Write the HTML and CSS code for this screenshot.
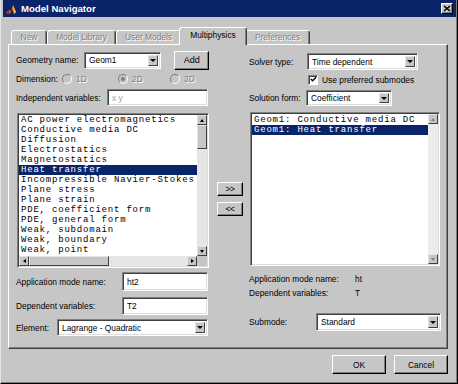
FILE: index.html
```html
<!DOCTYPE html>
<html lang="en">
<head>
  <meta charset="UTF-8">
  <title>Model Navigator</title>
  <link rel="stylesheet" href="styles.css">
</head>
<body>

<div class="window">
  <div class="titlebar">
    <svg class="app-icon" viewBox="0 0 12 12">
      <path d="M1 10 L4 7 L6 8 L8 2 L11 9 L9 11 L7 6 L5 11 Z" fill="#e8731c"/>
      <path d="M8 2 L11 9 L9 11 Z" fill="#f6c23a"/>
      <path d="M1 10 L4 7 L5 11 Z" fill="#b3261e"/>
    </svg>
    <span class="title">Model Navigator</span>
    <span class="close">
      <svg viewBox="0 0 8 7"><path d="M1 1 L7 6 M7 1 L1 6" stroke="#000" stroke-width="1.6"/></svg>
    </span>
  </div>

  <div class="tabs">
    <div class="tab disabled tab-new">New</div>
    <div class="tab disabled tab-lib">Model Library</div>
    <div class="tab disabled tab-user">User Models</div>
    <div class="tab active tab-multi">Multiphysics</div>
    <div class="tab disabled tab-pref">Preferences</div>
  </div>

  <div class="panel">
    <!-- left column -->
    <div class="col col-left">
      <div class="row row-geom">
        <span class="label lw-geom">Geometry name:</span>
        <div class="select sw-geom"><span class="value">Geom1</span><span class="drop"></span></div>
        <div class="btn btn-add">Add</div>
      </div>

      <div class="row row-dim">
        <span class="label lw-dim">Dimension:</span>
        <span class="radio-item r1"><span class="radio"></span><span class="disabled">1D</span></span>
        <span class="radio-item r2"><span class="radio checked"></span><span class="disabled">2D</span></span>
        <span class="radio-item"><span class="radio"></span><span class="disabled">3D</span></span>
      </div>

      <div class="row row-indep">
        <span class="label lw-indep">Independent variables:</span>
        <div class="input iw-indep"><span class="muted">x y</span></div>
      </div>

      <div class="listbox list-left">
        <div class="items">
          <div class="item">AC power electromagnetics</div>
          <div class="item">Conductive media DC</div>
          <div class="item">Diffusion</div>
          <div class="item">Electrostatics</div>
          <div class="item">Magnetostatics</div>
          <div class="item selected">Heat transfer</div>
          <div class="item">Incompressible Navier-Stokes</div>
          <div class="item">Plane stress</div>
          <div class="item">Plane strain</div>
          <div class="item">PDE, coefficient form</div>
          <div class="item">PDE, general form</div>
          <div class="item">Weak, subdomain</div>
          <div class="item">Weak, boundary</div>
          <div class="item">Weak, point</div>
        </div>
        <div class="vscroll">
          <div class="sbtn up"></div>
          <div class="thumb vthumb"></div>
          <div class="track"></div>
          <div class="sbtn down"></div>
        </div>
        <div class="hscroll">
          <div class="sbtn left"></div>
          <div class="thumb hthumb"></div>
          <div class="track"></div>
          <div class="sbtn right"></div>
        </div>
        <div class="corner"></div>
      </div>

      <div class="row row-app">
        <span class="label lw-app">Application mode name:</span>
        <div class="input iw-app">ht2</div>
      </div>

      <div class="row row-dep">
        <span class="label lw-app">Dependent variables:</span>
        <div class="input iw-app">T2</div>
      </div>

      <div class="row row-elem">
        <span class="label lw-elem">Element:</span>
        <div class="select sw-elem"><span class="value">Lagrange - Quadratic</span><span class="drop"></span></div>
      </div>
    </div>

    <!-- middle buttons -->
    <div class="col col-mid">
      <div class="btn btn-move">&gt;&gt;</div>
      <div class="btn btn-move">&lt;&lt;</div>
    </div>

    <!-- right column -->
    <div class="col col-right">
      <div class="row row-solver">
        <span class="label lw-solver">Solver type:</span>
        <div class="select sw-solver"><span class="value">Time dependent</span><span class="drop"></span></div>
      </div>

      <div class="row row-check">
        <span class="checkbox">
          <svg viewBox="0 0 8 8"><path d="M1 3.5 L3 5.5 L7 1.5" stroke="#000" stroke-width="1.6" fill="none"/></svg>
        </span>
        <span>Use preferred submodes</span>
      </div>

      <div class="row row-form">
        <span class="label lw-form">Solution form:</span>
        <div class="select sw-form"><span class="value">Coefficient</span><span class="drop"></span></div>
      </div>

      <div class="listbox list-right">
        <div class="items">
          <div class="item">Geom1: Conductive media DC</div>
          <div class="item selected">Geom1: Heat transfer</div>
        </div>
        <div class="vscroll light">
          <div class="sbtn up dim"></div>
          <div class="track"></div>
          <div class="sbtn down dim"></div>
        </div>
      </div>

      <div class="row row-info first">
        <span class="label lw-app">Application mode name:</span>
        <span>ht</span>
      </div>
      <div class="row row-info">
        <span class="label lw-app">Dependent variables:</span>
        <span>T</span>
      </div>

      <div class="row row-sub">
        <span class="label lw-sub">Submode:</span>
        <div class="select sw-sub"><span class="value">Standard</span><span class="drop"></span></div>
      </div>
    </div>
  </div>

  <div class="footer">
    <div class="btn btn-foot">OK</div>
    <div class="btn btn-foot">Cancel</div>
  </div>
</div>

</body>
</html>
```

FILE: styles.css
```css
* {
  box-sizing: border-box;
}

body {
  margin: 0;
  background-color: #c6c6c6;
  font-family: 'Liberation Sans', Arial, sans-serif;
  font-size: 8.4px;
  color: #000;
}

.window {
  width: 458px;
  height: 384px;
  background-color: #c6c6c6;
  border-left: 1px solid #e4e4e4;
  border-right: 1px solid #000;
  border-bottom: 1px solid #000;
  box-shadow: inset -1px -1px #808080;
  display: flex;
  flex-direction: column;
}

/* title bar */
.titlebar {
  height: 17px;
  margin: 0 1px 0 2px;
  padding: 0 3px 0 2px;
  background-color: #0a246a;
  display: flex;
  align-items: center;
}

.app-icon {
  width: 12px;
  height: 12px;
}

.title {
  flex: 1;
  margin-left: 4px;
  color: #fff;
  font-weight: bold;
  font-size: 9.6px;
}

.close {
  width: 12px;
  height: 11px;
  background-color: #c6c6c6;
  border: 1px solid;
  border-color: #fff #000 #000 #fff;
  box-shadow: inset -1px -1px #808080;
  display: flex;
  align-items: center;
  justify-content: center;
}

.close svg {
  width: 8px;
  height: 7px;
}

/* tabs */
.tabs {
  display: flex;
  align-items: flex-end;
  height: 17px;
  margin: 10px 0 0 10px;
  position: relative;
  z-index: 1;
}

.tab {
  height: 14px;
  line-height: 12px;
  text-align: center;
  border-top: 1px solid #fff;
  border-left: 1px solid #fff;
  border-right: 1px solid #404040;
  border-radius: 3px 3px 0 0;
  box-shadow: inset -1px 0 #808080;
  background-color: #c6c6c6;
}

.tab-new { width: 36px; }
.tab-lib { width: 69px; }
.tab-user { width: 65px; }
.tab-pref { width: 65px; }

.tab-multi {
  width: 68px;
  height: 18px;
  line-height: 15px;
  margin: 0 -2px -1px -2px;
  position: relative;
  z-index: 2;
}

.disabled {
  color: #808080;
  text-shadow: 1px 1px #fff;
}

/* panel */
.panel {
  width: 440px;
  height: 305px;
  margin-left: 7px;
  padding: 5px 0 0 7px;
  border: 1px solid;
  border-color: #fff #404040 #404040 #fff;
  box-shadow: inset -1px -1px #808080;
  display: flex;
}

.col {
  display: flex;
  flex-direction: column;
}

.col-left {
  width: 193px;
  margin-right: 8px;
}

.col-mid {
  width: 26px;
  margin-right: 6px;
  padding-top: 132px;
}

.col-right {
  width: 192px;
}

.row {
  display: flex;
  align-items: center;
  white-space: nowrap;
}

.label {
  flex-shrink: 0;
}

.lw-geom { width: 68px; }
.lw-dim { width: 46px; }
.lw-indep { width: 91px; }
.lw-app { width: 106px; }
.lw-elem { width: 41px; }
.lw-solver { width: 58px; }
.lw-form { width: 57px; }
.lw-sub { width: 67px; }

.row-geom { height: 20px; }
.row-dim { height: 11px; margin-top: 3px; }
.row-indep { height: 17px; margin-top: 5px; }
.row-app { height: 19px; margin-top: 4px; }
.row-dep { height: 18px; margin-top: 6px; }
.row-elem { height: 17px; margin-top: 4px; }

.row-solver { height: 17px; margin-top: 3px; }
.row-check { height: 11px; margin-top: 4px; padding-left: 59px; }
.row-form { height: 16px; margin-top: 5px; }
.row-info { height: 11px; margin-top: 3px; }
.row-info.first { margin-top: 7px; }
.row-sub { height: 18px; margin-top: 15px; }

/* text fields */
.input,
.select {
  height: 100%;
  background-color: #fff;
  border: 1px solid;
  border-color: #808080 #fff #fff #808080;
  box-shadow: inset 1px 1px #404040, inset -1px -1px #dcdcdc;
  display: flex;
  align-items: center;
  padding-left: 4px;
}

.muted {
  color: #a0a0a0;
}

.iw-indep { width: 101px; }
.iw-app { width: 86px; }

.select {
  padding: 2px 2px 2px 4px;
}

.select .value {
  flex: 1;
}

.drop {
  width: 10px;
  height: 100%;
  background-color: #c6c6c6;
  border: 1px solid;
  border-color: #e4e4e4 #404040 #404040 #e4e4e4;
  display: flex;
  align-items: center;
  justify-content: center;
}

.drop::after {
  content: '';
  border-left: 3px solid transparent;
  border-right: 3px solid transparent;
  border-top: 3px solid #000;
}

.sw-geom { width: 78px; height: 17px; }
.sw-elem { width: 151px; }
.sw-solver { width: 111px; }
.sw-form { width: 86px; }
.sw-sub { width: 125px; }

/* buttons */
.btn {
  background-color: #c6c6c6;
  border: 1px solid;
  border-color: #fff #000 #000 #fff;
  box-shadow: inset -1px -1px #808080;
  display: flex;
  align-items: center;
  justify-content: center;
}

.btn-add {
  width: 35px;
  height: 19px;
  margin-left: 13px;
  font-size: 9px;
}

.btn-move {
  height: 14px;
  margin-bottom: 6px;
  letter-spacing: -0.5px;
}

.btn-foot {
  width: 54px;
  height: 19px;
}

/* radios and checkbox */
.radio-item {
  display: flex;
  align-items: center;
  gap: 4px;
}

.r1 { width: 56px; }
.r2 { width: 52px; }

.radio {
  width: 10px;
  height: 10px;
  border-radius: 50%;
  border: 1px solid;
  border-color: #808080 #fff #fff #808080;
  background-color: #c6c6c6;
  display: flex;
  align-items: center;
  justify-content: center;
}

.radio.checked::after {
  content: '';
  width: 4px;
  height: 4px;
  border-radius: 50%;
  background-color: #808080;
}

.checkbox {
  width: 10px;
  height: 10px;
  margin-right: 4px;
  background-color: #fff;
  border: 1px solid;
  border-color: #808080 #fff #fff #808080;
  box-shadow: inset 1px 1px #404040;
  display: flex;
  align-items: center;
  justify-content: center;
}

.checkbox svg {
  width: 7px;
  height: 7px;
}

/* list boxes */
.listbox {
  background-color: #fff;
  border: 1px solid;
  border-color: #808080 #fff #fff #808080;
  box-shadow: inset 1px 1px #404040, inset -1px -1px #dcdcdc;
  padding: 1px;
  display: grid;
  grid-template-columns: 1fr 10px;
}

.list-left {
  width: 192px;
  height: 155px;
  margin: 7px 0 0 1px;
  grid-template-rows: 1fr 10px;
}

.list-right {
  width: 190px;
  height: 154px;
  margin: 6px 0 0 1px;
}

.items {
  overflow: hidden;
  white-space: nowrap;
  font-family: 'Liberation Mono', 'Courier New', monospace;
  font-size: 9px;
  letter-spacing: 0.8px;
}

.list-right .items {
  padding-top: 1px;
}

.item {
  height: 10px;
  line-height: 10px;
  padding-left: 2px;
}

.item.selected {
  background-color: #0a246a;
  color: #fff;
}

.vscroll,
.hscroll {
  display: flex;
  background-color: #e6e6e6;
}

.vscroll {
  flex-direction: column;
}

.vscroll.light {
  background-color: #ececec;
}

.track {
  flex: 1;
}

.sbtn,
.thumb {
  background-color: #c6c6c6;
  border: 1px solid;
  border-color: #e4e4e4 #404040 #404040 #e4e4e4;
  flex-shrink: 0;
}

.sbtn {
  width: 10px;
  height: 10px;
  display: flex;
  align-items: center;
  justify-content: center;
}

.sbtn::after {
  content: '';
  border: 2px solid transparent;
}

.sbtn.up::after { border-bottom: 3px solid #000; border-top-width: 0; }
.sbtn.down::after { border-top: 3px solid #000; border-bottom-width: 0; }
.sbtn.left::after { border-right: 3px solid #000; border-left-width: 0; }
.sbtn.right::after { border-left: 3px solid #000; border-right-width: 0; }
.sbtn.dim::after { border-top-color: transparent; border-bottom-color: transparent; }
.sbtn.up.dim::after { border-bottom-color: #808080; }
.sbtn.down.dim::after { border-top-color: #808080; }

.vthumb {
  height: 24px;
}

.hthumb {
  width: 80px;
}

.corner {
  background-color: #c6c6c6;
}

/* footer */
.footer {
  display: flex;
  justify-content: flex-end;
  gap: 8px;
  margin-top: 6px;
  padding-right: 9px;
}
```
